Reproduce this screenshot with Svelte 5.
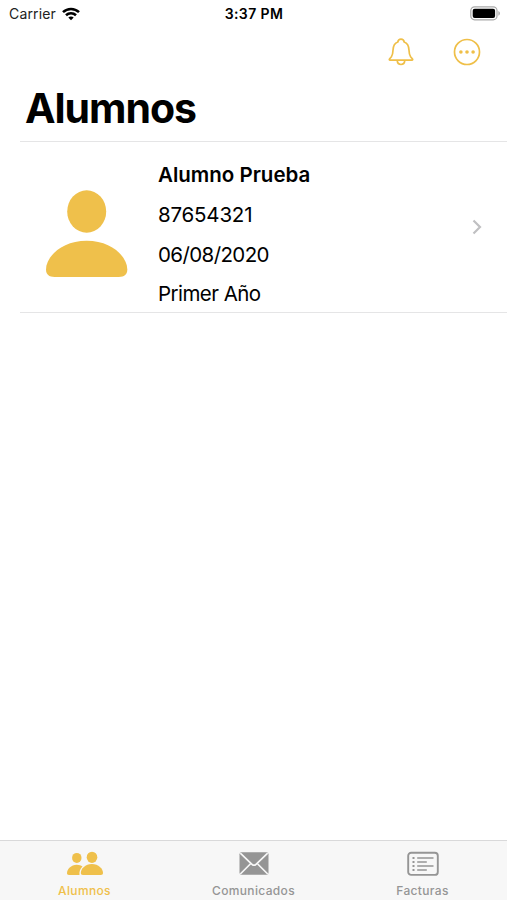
<script>
  let students = [
    { name: 'Alumno Prueba', document: '87654321', birthday: '06/08/2020', grade: 'Primer Año' }
  ];

  let tabs = [
    { id: 'students', label: 'Alumnos' },
    { id: 'messages', label: 'Comunicados' },
    { id: 'invoices', label: 'Facturas' }
  ];

  let active = 'students';
</script>

<div class="screen">
  <div class="status-bar">
    <div class="carrier">
      <span>Carrier</span>
      <svg width="18" height="14" viewBox="0 0 18 14" fill="none" stroke="#000" stroke-width="2.6">
        <path d="M1 5.1C5.5 .9 12.5 .9 17 5.1" />
        <path d="M4 8.2c2.8-2.6 7.2-2.6 10 0" />
        <path d="M6.3 10.5c1.5-1.4 3.9-1.4 5.4 0L9 13.3z" fill="#000" stroke="none" />
      </svg>
    </div>
    <span class="time">3:37 PM</span>
    <svg class="battery" width="31" height="15" viewBox="0 0 31 15">
      <rect x=".8" y=".8" width="26.2" height="13" rx="3.8" fill="#fff" stroke="#a9a9a9" stroke-width="1.2" />
      <rect x="2.7" y="2.7" width="22.4" height="9.2" rx="2" fill="#000" />
      <path d="M28.4 5v4.700c2-.8 2-3.900 0-4.700z" fill="#a9a9a9" />
    </svg>
  </div>

  <div class="nav-bar">
    <button aria-label="Notificaciones">
      <svg width="26" height="28" viewBox="0 0 26 28" fill="none" stroke="#efbf48" stroke-width="1.7" stroke-linejoin="round">
        <path d="M2 22.200h22c.7 0 .9-.7.5-1.200l-1.900-2.300c-1.100-1.500-1.500-3.500-1.600-6.500-.2-4.600-1.700-7.200-4.800-8.200-.3-1.800-1.600-2.800-3.200-2.800s-2.900 1-3.200 2.800C6.700 5 5.200 7.600 5 12.200c-.1 3-.5 5-1.600 6.500L1.500 21c-.4.5-.2 1.200.5 1.200z" />
        <path d="M9.200 22.400c.2 2.600 1.800 4.100 3.800 4.100s3.600-1.500 3.800-4.100" />
      </svg>
    </button>
    <button aria-label="Más opciones">
      <svg width="28" height="28" viewBox="0 0 28 28" fill="#efbf48">
        <circle cx="14" cy="14" r="12.500" fill="none" stroke="#efbf48" stroke-width="1.700" />
        <circle cx="7.900" cy="14" r="1.800" />
        <circle cx="14" cy="14" r="1.800" />
        <circle cx="20.100" cy="14" r="1.800" />
      </svg>
    </button>
  </div>

  <h1>Alumnos</h1>

  <div class="list">
    {#each students as s}
      <div class="student">
        <svg class="avatar" width="82" height="88" viewBox="0 0 82 88" fill="#efc04b">
          <ellipse cx="40.700" cy="21.500" rx="19.500" ry="21.200" />
          <path d="M8.500 87C3 87 0 84.300 0 79.500 0 66.500 16 50.700 40.700 50.700S81.300 66.500 81.300 79.500c0 4.800-3 7.500-8.500 7.500z" />
        </svg>
        <div class="info">
          <p class="name">{s.name}</p>
          <p class="document">{s.document}</p>
          <p class="birthday">{s.birthday}</p>
          <p class="grade">{s.grade}</p>
        </div>
        <svg class="chevron" width="10" height="16" viewBox="0 0 10 16" fill="none" stroke="#c0c0c2" stroke-width="2.200">
          <path d="M1.500 1.500 8 8l-6.500 6.500" />
        </svg>
      </div>
    {/each}
  </div>

  <div class="tab-bar">
    {#each tabs as tab}
      <button class="tab" class:active={tab.id === active} on:click={() => (active = tab.id)}>
        {#if tab.id === 'students'}
          <svg width="36" height="26" viewBox="0 0 36 26" fill="currentColor">
            <ellipse cx="9.800" cy="6.900" rx="4.700" ry="5" />
            <path d="M2 23.900c-1.300 0-2-.5-2-1.700 0-3.900 4-8.400 9.800-8.400 2.300 0 4.200.7 5.700 1.700-2.300 2-3.500 4.900-3 8.400z" />
            <ellipse cx="25" cy="6.300" rx="5.300" ry="5.600" />
            <path d="M16 23.900c-1.500 0-2.200-.6-2.200-1.900 0-3.900 4.500-8.900 11.100-8.900S36 18.100 36 22c0 1.300-.7 1.900-2.200 1.900z" />
          </svg>
        {:else if tab.id === 'messages'}
          <svg width="30" height="26" viewBox="0 0 30 26">
            <rect x=".500" y="1.300" width="29" height="22.500" rx="2" fill="currentColor" />
            <path d="M1.300 2.100 13 13.300c1.300 1.200 2.700 1.200 4 0L28.700 2.100M1.300 23l10-10M28.700 23l-10-10" fill="none" stroke="#f7f7f7" stroke-width="1.700" />
          </svg>
        {:else}
          <svg width="32" height="26" viewBox="0 0 32 26" fill="none" stroke="currentColor">
            <rect x="1.200" y="1.700" width="29.600" height="22.200" rx="3" stroke-width="1.900" />
            <path d="M10.200 7h16.300M10.200 11h9.600M10.200 15h16.300M10.200 19h9.600" stroke-width="1.500" />
            <path d="M5.500 7h2M5.500 11h2M5.500 15h2M5.500 19h2" stroke-width="2" />
          </svg>
        {/if}
        <span>{tab.label}</span>
      </button>
    {/each}
  </div>
</div>

<style>
  :global(body) {
    margin: 0;
    background: #fff;
  }

  .screen {
    display: flex;
    flex-direction: column;
    height: 900px;
    overflow: hidden;
    background: #fff;
    color: #000;
    font-family: Inter, 'Liberation Sans', sans-serif;
  }

  button {
    display: flex;
    padding: 0;
    border: 0;
    background: none;
    font-family: inherit;
  }

  svg {
    display: block;
    flex: none;
  }

  .status-bar {
    display: grid;
    grid-template-columns: 1fr auto 1fr;
    align-items: center;
    height: 27px;
    padding: 0 6px 0 9px;
    font-size: 14px;
  }

  .carrier {
    display: flex;
    align-items: center;
    gap: 6px;
    color: #222;
    letter-spacing: 0.15px;
  }

  .time {
    margin-right: 2px;
    font-weight: 600;
    letter-spacing: 0.4px;
  }

  .battery {
    justify-self: end;
  }

  .nav-bar {
    display: flex;
    justify-content: flex-end;
    align-items: center;
    gap: 39px;
    height: 50px;
    padding-right: 26px;
  }

  h1 {
    height: 64px;
    margin: 0;
    padding-left: 25px;
    font-size: 41px;
    font-weight: 700;
    line-height: 63px;
    letter-spacing: -1.05px;
  }

  .list {
    flex: 1;
    margin-left: 20px;
    border-top: 1px solid #e5e5e6;
  }

  .student {
    display: flex;
    align-items: center;
    height: 170px;
    padding: 0 25px 0 26px;
    border-bottom: 1px solid #e5e5e6;
  }

  .avatar {
    margin-top: 13px;
  }

  .info {
    flex: 1;
    margin: 15px 0 0 30px;
    font-size: 20.5px;
  }

  .info p {
    margin: 0;
    line-height: 39.6px;
  }

  .info .name {
    font-weight: 600;
  }

  .info .document {
    letter-spacing: -0.2px;
  }

  .info .birthday {
    letter-spacing: -0.6px;
  }

  .info .grade {
    letter-spacing: -0.55px;
  }

  .tab-bar {
    display: flex;
    box-sizing: border-box;
    height: 60px;
    border-top: 1px solid #d9d9da;
    background: #f7f7f7;
  }

  .tab {
    flex: 1;
    flex-direction: column;
    align-items: center;
    gap: 6px;
    padding-top: 10px;
    color: #959595;
    font-size: 12px;
    font-weight: 500;
    line-height: 15px;
    letter-spacing: 0.35px;
  }

  .tab.active {
    color: #efc04b;
  }
</style>
